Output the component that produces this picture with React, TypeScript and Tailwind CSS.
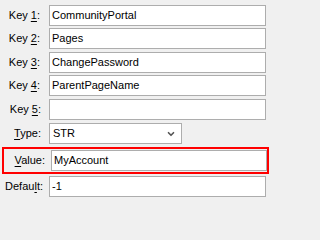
import { ChevronDown } from "lucide-react";

type Row = {
    before: string;
    key: string;
    after: string;
    value: string;
    top: string;
    gap: string;
};

const keyRows: Row[] = [
    { before: "Key ", key: "1", after: ":", value: "CommunityPortal", top: "mt-[5px]", gap: "pr-[9px]" },
    { before: "Key ", key: "2", after: ":", value: "Pages", top: "mt-[2px]", gap: "pr-[9px]" },
    { before: "Key ", key: "3", after: ":", value: "ChangePassword", top: "mt-[3px]", gap: "pr-[9px]" },
    { before: "Key ", key: "4", after: ":", value: "ParentPageName", top: "mt-[2px]", gap: "pr-[9px]" },
    { before: "Key ", key: "5", after: ":", value: "", top: "mt-[3px]", gap: "pr-[8px]" },
];

const Label = ({ before, mnemonic, after, gap }: { before: string; mnemonic: string; after: string; gap: string }) => (
    <div className={`w-[49px] shrink-0 text-right ${gap}`}>
        {before}
        <span className="underline underline-offset-[2px]">{mnemonic}</span>
        {after}
    </div>
);

const Field = ({ value }: { value: string }) => (
    <div className="h-[21px] w-[217px] border border-[#adadad] bg-white pl-[2px] flex items-center">
        {value}
    </div>
);

export default function App() {
    return (
        <div className="min-h-screen w-full bg-[#f0f0f0]">
            <div
                className="w-[271px] h-[202px] text-black text-[11px] leading-none overflow-hidden flex flex-col"
                style={{ fontFamily: '"Liberation Sans", Arial, sans-serif' }}
            >
                {keyRows.map((r) => (
                    <div key={r.key} className={`flex items-center ${r.top}`}>
                        <Label before={r.before} mnemonic={r.key} after={r.after} gap={r.gap} />
                        <Field value={r.value} />
                    </div>
                ))}

                {/* Type */}
                <div className="flex items-center mt-[3px]">
                    <Label before="" mnemonic="T" after="ype:" gap="pr-[8px]" />
                    <div className="h-[21px] w-[133px] border border-[#adadad] bg-white pl-[3px] pr-[5px] flex items-center justify-between">
                        <span>STR</span>
                        <ChevronDown size={10} strokeWidth={4} className="text-[#555555]" />
                    </div>
                </div>

                {/* Value, highlighted */}
                <div className="ml-[2px] mt-[3px] w-[267px] h-[27px] border-2 border-[#ff0000] flex items-center">
                    <div className="w-[47px] shrink-0 text-right pr-[6px]">
                        <span className="underline underline-offset-[2px]">V</span>alue:
                    </div>
                    <Field value="MyAccount" />
                </div>

                {/* Default */}
                <div className="flex items-center mt-[2px]">
                    <Label before="Defau" mnemonic="l" after="t:" gap="pr-[6px]" />
                    <Field value="-1" />
                </div>
            </div>
        </div>
    );
}
